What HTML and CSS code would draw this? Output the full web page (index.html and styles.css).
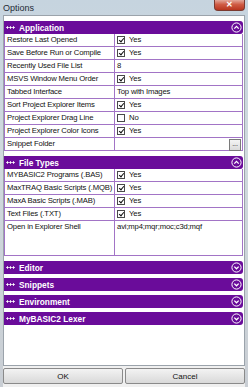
FILE: index.html
```html
<!DOCTYPE html>
<html lang="en">
<head>
    <meta charset="UTF-8">
    <meta name="viewport" content="width=device-width, initial-scale=1.0">
    <title>Options</title>
    <link rel="stylesheet" href="styles.css">
</head>
<body>
    <div class="window">
        <!-- Title Bar -->
        <div class="titlebar">
            <span class="title">Options</span>
            <div class="close">&#x2715;</div>
        </div>

        <div class="client">
            <div class="grid">
                <!-- Application -->
                <section class="group open">
                    <div class="group-head">
                        <span class="dots"></span>Application
                        <svg class="toggle" width="11" height="11" viewBox="0 0 11 11"><circle cx="5.5" cy="5.5" r="4.6" fill="none" stroke="#fff" stroke-width="1"/><path d="M3.3 6.6 L5.5 4.4 L7.7 6.6" fill="none" stroke="#fff" stroke-width="1.3"/></svg>
                    </div>
                    <div class="row"><div class="label">Restore Last Opened</div><div class="value"><span class="check on"></span>Yes</div></div>
                    <div class="row"><div class="label">Save Before Run or Compile</div><div class="value"><span class="check on"></span>Yes</div></div>
                    <div class="row"><div class="label">Recently Used File List</div><div class="value">8</div></div>
                    <div class="row"><div class="label">MSVS Window Menu Order</div><div class="value"><span class="check on"></span>Yes</div></div>
                    <div class="row"><div class="label">Tabbed Interface</div><div class="value">Top with Images</div></div>
                    <div class="row"><div class="label">Sort Project Explorer Items</div><div class="value"><span class="check on"></span>Yes</div></div>
                    <div class="row"><div class="label">Project Explorer Drag Line</div><div class="value"><span class="check"></span>No</div></div>
                    <div class="row"><div class="label">Project Explorer Color Icons</div><div class="value"><span class="check on"></span>Yes</div></div>
                    <div class="row"><div class="label">Snippet Folder</div><div class="value"><span class="browse">...</span></div></div>
                </section>

                <!-- File Types -->
                <section class="group open">
                    <div class="group-head">
                        <span class="dots"></span>File Types
                        <svg class="toggle" width="11" height="11" viewBox="0 0 11 11"><circle cx="5.5" cy="5.5" r="4.6" fill="none" stroke="#fff" stroke-width="1"/><path d="M3.3 6.6 L5.5 4.4 L7.7 6.6" fill="none" stroke="#fff" stroke-width="1.3"/></svg>
                    </div>
                    <div class="row"><div class="label">MYBASIC2 Programs (.BAS)</div><div class="value"><span class="check on"></span>Yes</div></div>
                    <div class="row"><div class="label">MaxTRAQ Basic Scripts (.MQB)</div><div class="value"><span class="check on"></span>Yes</div></div>
                    <div class="row"><div class="label">MaxA Basic Scripts (.MAB)</div><div class="value"><span class="check on"></span>Yes</div></div>
                    <div class="row"><div class="label">Text Files (.TXT)</div><div class="value"><span class="check on"></span>Yes</div></div>
                    <div class="row tall"><div class="label">Open in Explorer Shell</div><div class="value">avi;mp4;mqr;moc;c3d;mqf</div></div>
                </section>

                <!-- Collapsed groups -->
                <section class="group">
                    <div class="group-head">
                        <span class="dots"></span>Editor
                        <svg class="toggle" width="11" height="11" viewBox="0 0 11 11"><circle cx="5.5" cy="5.5" r="4.6" fill="none" stroke="#fff" stroke-width="1"/><path d="M3.3 4.6 L5.5 6.8 L7.7 4.6" fill="none" stroke="#fff" stroke-width="1.3"/></svg>
                    </div>
                </section>
                <section class="group">
                    <div class="group-head">
                        <span class="dots"></span>Snippets
                        <svg class="toggle" width="11" height="11" viewBox="0 0 11 11"><circle cx="5.5" cy="5.5" r="4.6" fill="none" stroke="#fff" stroke-width="1"/><path d="M3.3 4.6 L5.5 6.8 L7.7 4.6" fill="none" stroke="#fff" stroke-width="1.3"/></svg>
                    </div>
                </section>
                <section class="group">
                    <div class="group-head">
                        <span class="dots"></span>Environment
                        <svg class="toggle" width="11" height="11" viewBox="0 0 11 11"><circle cx="5.5" cy="5.5" r="4.6" fill="none" stroke="#fff" stroke-width="1"/><path d="M3.3 4.6 L5.5 6.8 L7.7 4.6" fill="none" stroke="#fff" stroke-width="1.3"/></svg>
                    </div>
                </section>
                <section class="group">
                    <div class="group-head">
                        <span class="dots"></span>MyBASIC2 Lexer
                        <svg class="toggle" width="11" height="11" viewBox="0 0 11 11"><circle cx="5.5" cy="5.5" r="4.6" fill="none" stroke="#fff" stroke-width="1"/><path d="M3.3 4.6 L5.5 6.8 L7.7 4.6" fill="none" stroke="#fff" stroke-width="1.3"/></svg>
                    </div>
                </section>
            </div>

            <!-- Dialog Buttons -->
            <div class="buttons">
                <button class="btn">OK</button>
                <button class="btn">Cancel</button>
            </div>
        </div>
    </div>
</body>
</html>
```

FILE: styles.css
```css
body {
    margin: 0;
    font-family: "Liberation Sans", Arial, sans-serif;
    background-color: #c8d3de;
}
.window {
    width: 248px;
    height: 387px;
    box-sizing: border-box;
    display: flex;
    flex-direction: column;
    padding: 0 3px 0 3px;
    background: linear-gradient(180deg, #c6d4df 0%, #d0dade 40%, #c9ced4 100%);
}
.titlebar {
    height: 15px;
    display: flex;
    justify-content: space-between;
    align-items: flex-start;
}
.title {
    font-size: 9px;
    color: #1e2a36;
    margin-top: 3px;
}
.close {
    width: 31px;
    height: 11px;
    background: linear-gradient(180deg, #e3a79a 0%, #cf5b44 45%, #b8351e 100%);
    border: 1px solid #7a3a30;
    border-top: none;
    border-radius: 0 0 4px 4px;
    box-sizing: border-box;
    color: #fff;
    font-size: 8px;
    font-weight: bold;
    text-align: center;
    line-height: 10px;
}
.client {
    flex: 1;
    display: flex;
    flex-direction: column;
    background-color: #f0f0f0;
    padding-bottom: 3px;
}
.grid {
    flex: 1;
    background: white;
    border: 1px solid #9ba3ab;
    padding-top: 5px;
}
.group {
    margin-bottom: 4px;
}
.group.open {
    margin-bottom: 5px;
}
.group-head {
    height: 13px;
    margin-right: 1px;
    display: flex;
    align-items: center;
    background-color: #6a0c9a;
    color: white;
    font-size: 8.3px;
    font-weight: bold;
    padding-left: 2px;
    border-radius: 0 3px 3px 0;
}
.dots {
    width: 9px;
    height: 3px;
    margin-right: 4px;
    background: radial-gradient(circle, #fff 0.9px, transparent 1.3px) 0 0 / 3px 3px repeat-x;
}
.toggle {
    margin-left: auto;
    margin-right: 1px;
}
.row {
    display: grid;
    grid-template-columns: 110px 1fr;
    height: 13px;
    box-sizing: border-box;
    border: 1px solid #a274c6;
    border-top: none;
    margin-right: 1px;
    font-size: 7.7px;
    letter-spacing: -0.15px;
    color: #111;
}
.row.tall {
    height: 35px;
}
.label {
    border-right: 1px solid #a274c6;
    padding-left: 2px;
    line-height: 12px;
    white-space: nowrap;
    overflow: hidden;
}
.value {
    display: flex;
    align-items: flex-start;
    padding-left: 2px;
    line-height: 12px;
    white-space: nowrap;
}
.check {
    width: 8px;
    height: 8px;
    box-sizing: border-box;
    border: 1px solid #4a4a4a;
    background: #fff;
    margin: 2px 4px 0 0;
    position: relative;
}
.check.on::after {
    content: "";
    position: absolute;
    left: 2px;
    top: 0px;
    width: 2px;
    height: 4px;
    border: solid #111;
    border-width: 0 1.3px 1.3px 0;
    transform: rotate(40deg);
}
.browse {
    margin-left: auto;
    margin-right: 1px;
    width: 12px;
    height: 12px;
    box-sizing: border-box;
    border: 1px solid #7a7a7a;
    background: linear-gradient(180deg, #f4f4f4, #dadada);
    font-size: 7px;
    line-height: 8px;
    text-align: center;
    margin-top: 1px;
}
.buttons {
    display: flex;
    gap: 2px;
    margin-top: 2px;
}
.btn {
    flex: 1;
    height: 16px;
    padding: 0;
    font-family: "Liberation Sans", Arial, sans-serif;
    font-size: 8px;
    color: #111;
    border: 1px solid #8a8a8a;
    border-radius: 2px;
    background: linear-gradient(180deg, #f3f3f3 0%, #e6e6e6 50%, #d9d9d9 100%);
}
```
